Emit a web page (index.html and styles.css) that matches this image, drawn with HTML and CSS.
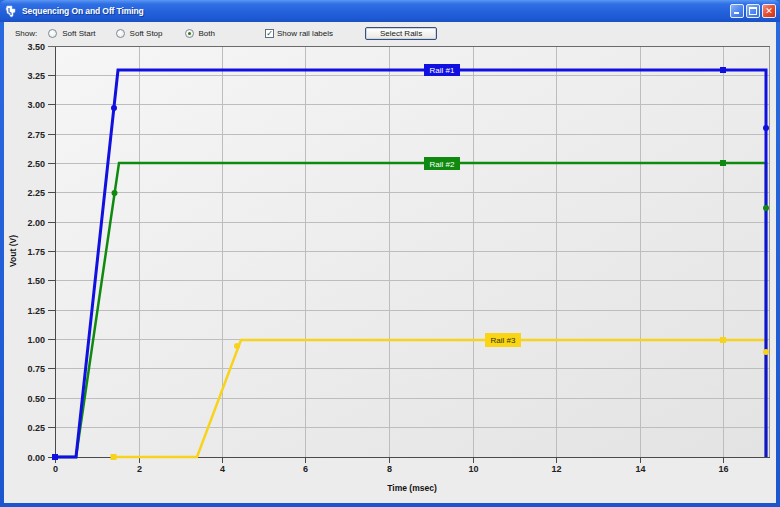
FILE: index.html
```html
<!DOCTYPE html>
<html>
<head>
<meta charset="utf-8">
<title>Sequencing On and Off Timing</title>
<link rel="stylesheet" href="styles.css">
</head>
<body>
<div class="window">
  <div class="titlebar">
    <svg class="appicon" width="13" height="13" viewBox="0 0 13 13">
      <path d="M2 1h5v3h3v3l-2 1v3l-2 1-2-3-2-1V6L1 4z" fill="#ffffff" stroke="#c8d8f0" stroke-width="0.5"/>
      <path d="M4 3v4l2 1v2" fill="none" stroke="#2a60c8" stroke-width="1.2"/>
    </svg>
    <span class="title">Sequencing On and Off Timing</span>
    <div class="winbtns">
      <span class="wbtn min"><span class="minbar"></span></span>
      <span class="wbtn max"><span class="maxbox"></span></span>
      <span class="wbtn close">&#x2715;</span>
    </div>
  </div>
  <div class="content">
    <div class="toolbar">
      <span class="lbl">Show:</span>
      <label class="opt o1"><span class="radio"></span>Soft Start</label>
      <label class="opt o2"><span class="radio"></span>Soft Stop</label>
      <label class="opt o3"><span class="radio on"></span>Both</label>
      <label class="opt o4"><span class="check">&#x2713;</span>Show rail labels</label>
      <span class="btn">Select Rails</span>
    </div>
    <svg class="chart" width="772" height="461" viewBox="4 42 772 461">
      <defs>
        <linearGradient id="bg" x1="0" y1="0" x2="1" y2="1">
          <stop offset="0" stop-color="#f6f6f6"/>
          <stop offset="1" stop-color="#e3e3e3"/>
        </linearGradient>
      </defs>
      <rect x="55.5" y="46.5" width="714" height="411" fill="url(#bg)" stroke="#9a9a9a" stroke-width="1"/>
      <g class="grid">
        <line x1="55" x2="769" y1="75.5" y2="75.5"/>
        <line x1="55" x2="769" y1="104.5" y2="104.5"/>
        <line x1="55" x2="769" y1="134.5" y2="134.5"/>
        <line x1="55" x2="769" y1="163.5" y2="163.5"/>
        <line x1="55" x2="769" y1="192.5" y2="192.5"/>
        <line x1="55" x2="769" y1="222.5" y2="222.5"/>
        <line x1="55" x2="769" y1="251.5" y2="251.5"/>
        <line x1="55" x2="769" y1="280.5" y2="280.5"/>
        <line x1="55" x2="769" y1="310.5" y2="310.5"/>
        <line x1="55" x2="769" y1="339.5" y2="339.5"/>
        <line x1="55" x2="769" y1="368.5" y2="368.5"/>
        <line x1="55" x2="769" y1="398.5" y2="398.5"/>
        <line x1="55" x2="769" y1="427.5" y2="427.5"/>
        <line y1="46" y2="457" x1="139.5" x2="139.5"/>
        <line y1="46" y2="457" x1="222.5" x2="222.5"/>
        <line y1="46" y2="457" x1="305.5" x2="305.5"/>
        <line y1="46" y2="457" x1="389.5" x2="389.5"/>
        <line y1="46" y2="457" x1="473.5" x2="473.5"/>
        <line y1="46" y2="457" x1="556.5" x2="556.5"/>
        <line y1="46" y2="457" x1="640.5" x2="640.5"/>
        <line y1="46" y2="457" x1="723.5" x2="723.5"/>
      </g>
      <g class="axis">
        <line x1="55.5" x2="55.5" y1="46" y2="458"/>
        <line x1="55" x2="770" y1="457.5" y2="457.5"/>
        <line x1="48" x2="770" y1="46.5" y2="46.5" class="top"/>
        <line x1="48" x2="55" y1="75.5" y2="75.5"/>
        <line x1="48" x2="55" y1="104.5" y2="104.5"/>
        <line x1="48" x2="55" y1="134.5" y2="134.5"/>
        <line x1="48" x2="55" y1="163.5" y2="163.5"/>
        <line x1="48" x2="55" y1="192.5" y2="192.5"/>
        <line x1="48" x2="55" y1="222.5" y2="222.5"/>
        <line x1="48" x2="55" y1="251.5" y2="251.5"/>
        <line x1="48" x2="55" y1="280.5" y2="280.5"/>
        <line x1="48" x2="55" y1="310.5" y2="310.5"/>
        <line x1="48" x2="55" y1="339.5" y2="339.5"/>
        <line x1="48" x2="55" y1="368.5" y2="368.5"/>
        <line x1="48" x2="55" y1="398.5" y2="398.5"/>
        <line x1="48" x2="55" y1="427.5" y2="427.5"/>
        <line x1="48" x2="55" y1="457.5" y2="457.5"/>
        <line y1="457" y2="463" x1="55.5" x2="55.5"/>
        <line y1="457" y2="463" x1="139.5" x2="139.5"/>
        <line y1="457" y2="463" x1="222.5" x2="222.5"/>
        <line y1="457" y2="463" x1="305.5" x2="305.5"/>
        <line y1="457" y2="463" x1="389.5" x2="389.5"/>
        <line y1="457" y2="463" x1="473.5" x2="473.5"/>
        <line y1="457" y2="463" x1="556.5" x2="556.5"/>
        <line y1="457" y2="463" x1="640.5" x2="640.5"/>
        <line y1="457" y2="463" x1="723.5" x2="723.5"/>
      </g>
      <g class="ylbl">
        <text x="45" y="49.5">3.50</text>
        <text x="45" y="78.5">3.25</text>
        <text x="45" y="107.5">3.00</text>
        <text x="45" y="137.5">2.75</text>
        <text x="45" y="166.5">2.50</text>
        <text x="45" y="195.5">2.25</text>
        <text x="45" y="225.5">2.00</text>
        <text x="45" y="254.5">1.75</text>
        <text x="45" y="283.5">1.50</text>
        <text x="45" y="313.5">1.25</text>
        <text x="45" y="342.5">1.00</text>
        <text x="45" y="371.5">0.75</text>
        <text x="45" y="401.5">0.50</text>
        <text x="45" y="430.5">0.25</text>
        <text x="45" y="460.5">0.00</text>
      </g>
      <g class="xlbl">
        <text x="55.5" y="472">0</text>
        <text x="139.5" y="472">2</text>
        <text x="222.5" y="472">4</text>
        <text x="305.5" y="472">6</text>
        <text x="389.5" y="472">8</text>
        <text x="473.5" y="472">10</text>
        <text x="556.5" y="472">12</text>
        <text x="640.5" y="472">14</text>
        <text x="723.5" y="472">16</text>
      </g>
      <text class="axtitle" x="412" y="491">Time (msec)</text>
      <text class="axtitle" transform="translate(16 251) rotate(-90)">Vout (V)</text>

      <polyline class="s3" points="113.5,457 197,457 241,340 766,340 766,457"/>
      <polyline class="s2" points="55,457 76,457 119,163 766,163 766,457"/>
      <polyline class="s1" points="55,457 76,457 118,70 766,70 766,457"/>

      <g class="m3">
        <rect x="110.5" y="454" width="6" height="6"/>
        <circle cx="237" cy="346" r="3"/>
        <rect x="720" y="337" width="6" height="6"/>
        <circle cx="766" cy="352" r="3"/>
      </g>
      <g class="m2">
        <circle cx="114.5" cy="193" r="3"/>
        <rect x="720" y="160" width="6" height="6"/>
        <circle cx="766" cy="208" r="3"/>
      </g>
      <g class="m1">
        <rect x="52" y="454" width="6" height="6"/>
        <circle cx="114" cy="108" r="3"/>
        <rect x="720" y="67" width="6" height="6"/>
        <circle cx="766" cy="128" r="3"/>
      </g>

      <g class="tag t1">
        <rect x="424" y="64" width="36" height="12"/>
        <text x="442" y="73">Rail #1</text>
      </g>
      <g class="tag t2">
        <rect x="424" y="157" width="36" height="13"/>
        <text x="442" y="166.5">Rail #2</text>
      </g>
      <g class="tag t3">
        <rect x="485" y="333" width="36" height="14"/>
        <text x="503" y="343">Rail #3</text>
      </g>
    </svg>
  </div>
</div>
</body>
</html>
```

FILE: styles.css
```css
html, body {
  margin: 0;
  padding: 0;
  background: #ffffff;
}

body {
  font-family: "Liberation Sans", "DejaVu Sans", Arial, sans-serif;
}

.window {
  width: 780px;
  height: 507px;
  box-sizing: border-box;
  display: flex;
  flex-direction: column;
  background: linear-gradient(180deg, #2a6ae0 0%, #1c56cf 100%);
  padding: 0 4px 4px 4px;
}

.titlebar {
  height: 22px;
  margin: 0 -4px;
  padding: 0 3px 0 5px;
  display: flex;
  align-items: center;
  background: linear-gradient(180deg, #5b97f4 0%, #2f6fe4 18%, #2361db 55%, #1d58d2 85%, #1a4fc2 100%);
  border-radius: 6px 6px 0 0;
  box-sizing: border-box;
}

.appicon {
  flex: none;
}

.title {
  margin-left: 4px;
  color: #ffffff;
  font-weight: bold;
  font-size: 8.5px;
  letter-spacing: -0.1px;
  text-shadow: 1px 1px 0 #143e99;
  flex: 1;
}

.winbtns {
  display: flex;
  gap: 2px;
  padding-right: 1px;
}

.wbtn {
  width: 14px;
  height: 14px;
  box-sizing: border-box;
  border: 1px solid #e6eefc;
  border-radius: 2px;
  background: linear-gradient(135deg, #8ab2f8 0%, #4a84ee 60%, #3a70e0 100%);
  position: relative;
  display: flex;
  align-items: center;
  justify-content: center;
}

.minbar {
  position: absolute;
  left: 3px;
  bottom: 3px;
  width: 5px;
  height: 2px;
  background: #ffffff;
}

.maxbox {
  width: 6px;
  height: 5px;
  border: 1px solid #ffffff;
  border-top-width: 2px;
}

.close {
  background: linear-gradient(135deg, #f4907a 0%, #e44a2c 55%, #cc361e 100%);
  color: #ffffff;
  font-size: 9px;
  font-weight: bold;
  line-height: 1;
}

.content {
  flex: 1;
  display: flex;
  flex-direction: column;
  background: #ececec;
}

.toolbar {
  height: 20px;
  display: flex;
  align-items: center;
  font-size: 8px;
  color: #1a1a1a;
  padding-left: 11px;
  padding-top: 2px;
  box-sizing: border-box;
}

.opt {
  display: flex;
  align-items: center;
}

.o1 { margin-left: 11px; }
.o2 { margin-left: 20px; }
.o3 { margin-left: 22px; }
.o4 { margin-left: 50px; }

.radio {
  width: 9px;
  height: 9px;
  box-sizing: border-box;
  border: 1px solid #7a8a99;
  border-radius: 50%;
  background: radial-gradient(circle at 40% 40%, #ffffff 0%, #e6e6e0 100%);
  margin-right: 5px;
  display: flex;
  align-items: center;
  justify-content: center;
}

.radio.on::after {
  content: "";
  width: 3px;
  height: 3px;
  border-radius: 50%;
  background: #3b6e22;
}

.check {
  width: 9px;
  height: 9px;
  box-sizing: border-box;
  border: 1px solid #5a6e85;
  background: #ffffff;
  margin-right: 3px;
  font-size: 8px;
  line-height: 7px;
  text-align: center;
  color: #2a4a10;
}

.btn {
  margin-left: 32px;
  width: 72px;
  height: 13px;
  box-sizing: border-box;
  border: 1px solid #3c4e74;
  border-radius: 2px;
  background: linear-gradient(180deg, #ffffff 0%, #ecebe6 85%, #d6d0c5 100%);
  box-shadow: inset 0 0 0 1px #c8d6f0;
  text-align: center;
  font-size: 8px;
  line-height: 11px;
  color: #1a1a1a;
}

.chart {
  display: block;
  font-family: "Liberation Sans", "DejaVu Sans", Arial, sans-serif;
}

.grid line {
  stroke: #bdbdbd;
  stroke-width: 1;
}

.axis line {
  stroke: #4a4a4a;
  stroke-width: 1;
}

.axis line.top {
  stroke: #6a6a6a;
}

.ylbl text {
  font-size: 9px;
  font-weight: bold;
  fill: #222222;
  text-anchor: end;
}

.xlbl text {
  font-size: 9px;
  font-weight: bold;
  fill: #222222;
  text-anchor: middle;
}

.axtitle {
  font-size: 8.5px;
  font-weight: bold;
  fill: #111111;
  text-anchor: middle;
}

.s1, .s2, .s3 {
  fill: none;
  stroke-linejoin: miter;
}

.s1 { stroke: #1010e0; stroke-width: 3; }
.s2 { stroke: #0f8a0f; stroke-width: 2.5; }
.s3 { stroke: #f7d31c; stroke-width: 2.5; }

.m1 rect, .m1 circle { fill: #1010e0; }
.m2 rect, .m2 circle { fill: #0f8a0f; }
.m3 rect, .m3 circle { fill: #f7d31c; }

.tag text {
  font-size: 8px;
  text-anchor: middle;
}

.t1 rect { fill: #1010e0; }
.t1 text { fill: #ffffff; }
.t2 rect { fill: #0f8a0f; }
.t2 text { fill: #ffffff; }
.t3 rect { fill: #f9d516; }
.t3 text { fill: #333300; }
```
